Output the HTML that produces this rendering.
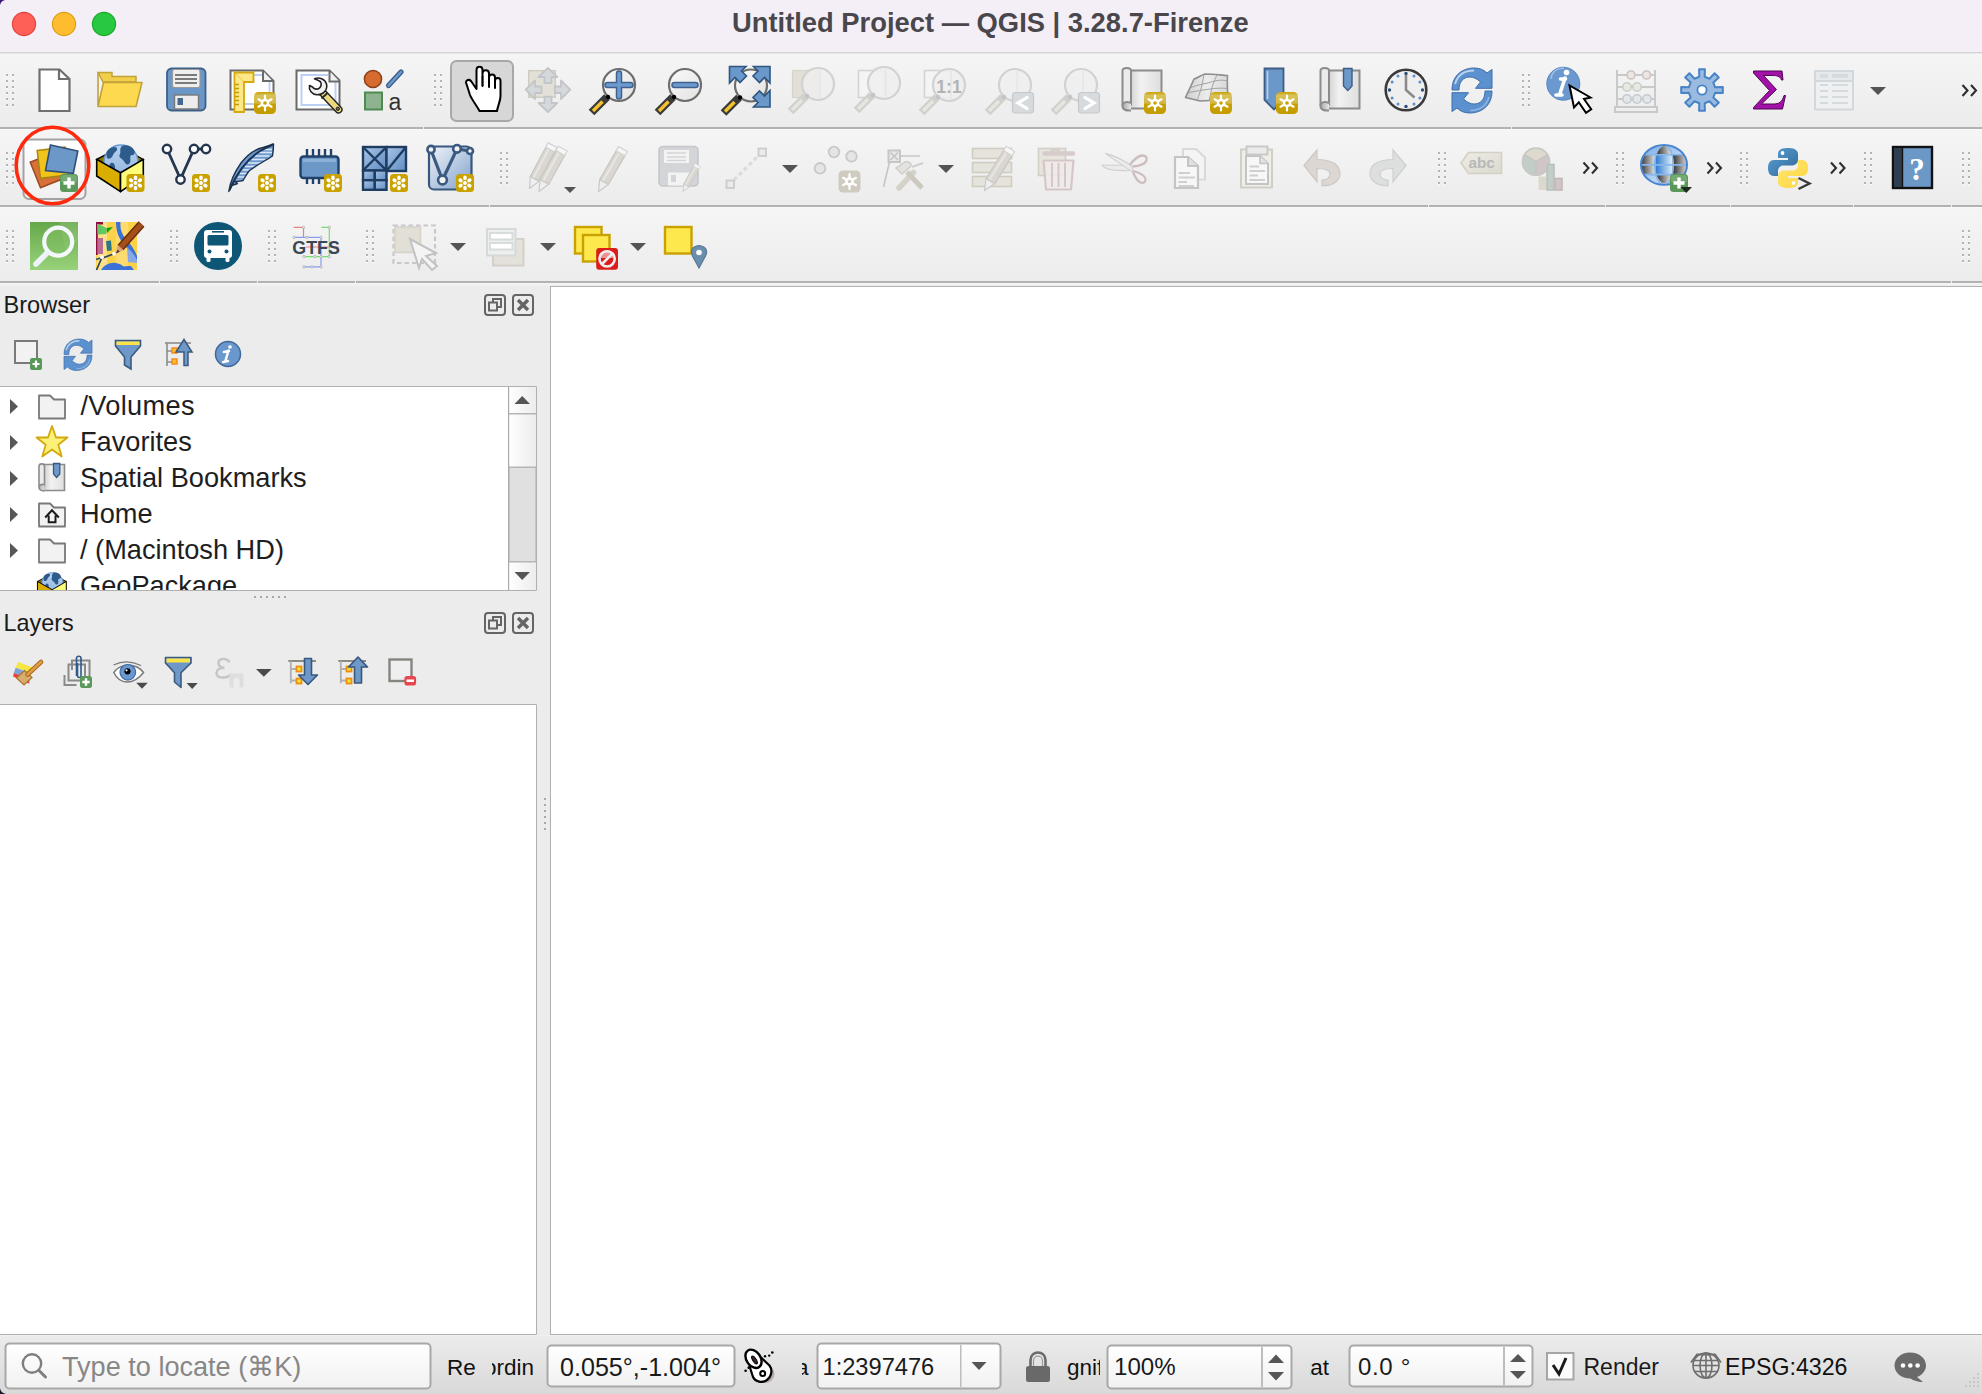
<!DOCTYPE html>
<html><head><meta charset="utf-8">
<style>
html,body{margin:0;padding:0;width:1982px;height:1394px;overflow:hidden;background:#ececec;}
svg{position:absolute;left:0;top:0;display:block}
text{font-family:"Liberation Sans",sans-serif}
text.serif{font-family:"Liberation Serif",serif}
</style></head>
<body>
<svg width="1982" height="1394" viewBox="0 0 1982 1394">
<defs>
 <linearGradient id="tbg" x1="0" y1="0" x2="0" y2="1"><stop offset="0" stop-color="#f5f5f5"/><stop offset="1" stop-color="#ececec"/></linearGradient>
 <linearGradient id="sbg" x1="0" y1="0" x2="0" y2="1"><stop offset="0" stop-color="#ececec"/><stop offset="1" stop-color="#d9d9d9"/></linearGradient>
 <linearGradient id="fld" x1="0" y1="0" x2="0" y2="1"><stop offset="0" stop-color="#ffffff"/><stop offset="1" stop-color="#f1f1f1"/></linearGradient>
 <linearGradient id="sbtn" x1="0" y1="0" x2="1" y2="0"><stop offset="0" stop-color="#ffffff"/><stop offset="1" stop-color="#ececec"/></linearGradient>
 <g id="dots"><rect x="0" y="2" width="2" height="1" fill="#fafafa"/><rect x="6" y="2" width="2" height="1" fill="#fafafa"/><rect x="0" y="8" width="2" height="1" fill="#fafafa"/><rect x="6" y="8" width="2" height="1" fill="#fafafa"/><rect x="0" y="14" width="2" height="1" fill="#fafafa"/><rect x="6" y="14" width="2" height="1" fill="#fafafa"/><rect x="0" y="20" width="2" height="1" fill="#fafafa"/><rect x="6" y="20" width="2" height="1" fill="#fafafa"/><rect x="0" y="26" width="2" height="1" fill="#fafafa"/><rect x="6" y="26" width="2" height="1" fill="#fafafa"/><rect x="0" y="32" width="2" height="1" fill="#fafafa"/><rect x="6" y="32" width="2" height="1" fill="#fafafa"/><rect x="0" y="0" width="2" height="2"/><rect x="6" y="0" width="2" height="2"/><rect x="0" y="6" width="2" height="2"/><rect x="6" y="6" width="2" height="2"/><rect x="0" y="12" width="2" height="2"/><rect x="6" y="12" width="2" height="2"/><rect x="0" y="18" width="2" height="2"/><rect x="6" y="18" width="2" height="2"/><rect x="0" y="24" width="2" height="2"/><rect x="6" y="24" width="2" height="2"/><rect x="0" y="30" width="2" height="2"/><rect x="6" y="30" width="2" height="2"/></g>
 <path id="dd" d="M0,0H16L8,8Z" fill="#545454"/>
 <path id="chev" d="M0.5,0.5L5.5,6L0.5,11.5M9,0.5L14,6L9,11.5" fill="none" stroke="#2e2e2e" stroke-width="2.1"/>
</defs>

<!-- title bar -->
<rect x="0" y="0" width="1982" height="52" fill="#f4eff6"/>
<rect x="0" y="52" width="1982" height="1" fill="#d3d3d3"/>
<rect x="0" y="53" width="1982" height="1" fill="#e7e7e7"/>
<circle cx="24" cy="24" r="11.6" fill="#fe5f57" stroke="#df4039" stroke-width="1.1"/>
<circle cx="64" cy="24" r="11.6" fill="#febc2e" stroke="#dd9d12" stroke-width="1.1"/>
<circle cx="104" cy="24" r="11.6" fill="#28c840" stroke="#18a826" stroke-width="1.1"/>
<text x="732" y="32" font-size="27.35" font-weight="bold" fill="#4a474c">Untitled Project — QGIS | 3.28.7-Firenze</text>

<!-- toolbars -->
<rect x="0" y="54" width="1982" height="73" fill="url(#tbg)"/>
<rect x="0" y="127" width="1982" height="2" fill="#b2b2b2"/>
<rect x="0" y="129" width="1982" height="1" fill="#f8f8f8"/>
<rect x="0" y="130" width="1982" height="75" fill="url(#tbg)"/>
<rect x="0" y="205" width="1982" height="2" fill="#b2b2b2"/>
<rect x="0" y="207" width="1982" height="1" fill="#f8f8f8"/>
<rect x="0" y="208" width="1982" height="73" fill="url(#tbg)"/>
<rect x="0" y="281" width="1982" height="2" fill="#b2b2b2"/>
<rect x="0" y="283" width="1982" height="1" fill="#f6f6f6"/><rect x="0" y="284" width="1982" height="2" fill="#f0f0f0"/>

<g fill="#f0f0f0">
<rect x="423" y="127" width="1" height="2"/><rect x="1511" y="127" width="1" height="2"/>
<rect x="489" y="205" width="1" height="2"/><rect x="1428" y="205" width="1" height="2"/><rect x="1605" y="205" width="1" height="2"/><rect x="1730" y="205" width="1" height="2"/><rect x="1853" y="205" width="1" height="2"/><rect x="1951" y="205" width="1" height="2"/>
<rect x="159" y="281" width="1" height="2"/><rect x="257" y="281" width="1" height="2"/><rect x="355" y="281" width="1" height="2"/><rect x="1951" y="281" width="1" height="2"/>
</g>
<!-- panels -->
<text x="3.5" y="313" font-size="23.6" fill="#1a1a1a">Browser</text>
<rect x="0" y="386" width="537" height="205" fill="#ffffff"/><path d="M-1,386.5H536.5V590.5H-1" fill="none" stroke="#b0b0b0" stroke-width="1"/>
<text x="3.5" y="631" font-size="23.4" fill="#1a1a1a">Layers</text>
<rect x="0" y="704" width="537" height="631" fill="#ffffff"/><path d="M-1,704.5H536.5V1334.5H-1" fill="none" stroke="#b0b0b0" stroke-width="1"/>

<!-- map canvas -->
<rect x="550.5" y="286.5" width="1440" height="1048" fill="#ffffff" stroke="#b0b0b0" stroke-width="1"/>

<!-- status bar -->
<rect x="0" y="1335" width="1982" height="59" fill="url(#sbg)"/><rect x="0" y="1335" width="1982" height="1" fill="#f0f0f0"/>

<!-- ===== status bar ===== -->
<rect x="5.5" y="1343.5" width="425" height="45" rx="4" fill="url(#fld)" stroke="#a8a8a8" stroke-width="2"/>
<circle cx="32" cy="1363.5" r="9.2" fill="none" stroke="#7e7e7e" stroke-width="2.4"/>
<path d="M39,1370.5L45.5,1377" stroke="#7e7e7e" stroke-width="3" stroke-linecap="round"/>
<text x="62" y="1376" font-size="27.1" fill="#878787">Type to locate (⌘K)</text>
<text x="447" y="1375" font-size="22.5" fill="#111">Re</text>
<clipPath id="cpOrd"><rect x="492" y="1340" width="60" height="50"/></clipPath>
<text x="484" y="1375" font-size="22.5" fill="#111" clip-path="url(#cpOrd)">ordin</text>
<rect x="547.5" y="1345.5" width="187" height="41" rx="4" fill="url(#fld)" stroke="#a8a8a8" stroke-width="2"/>
<text x="560" y="1375.5" font-size="25.1" fill="#1a1a1a">0.055°,-1.004°</text>
<!-- mouse icon -->
<g>
 <circle cx="765.5" cy="1374" r="9" fill="#b9abab"/>
 <path d="M749.5,1366L761,1357.5L769.5,1365.5C772.5,1369.5 772,1376.5 767,1380C762,1383.5 755.5,1382 753,1377Z" fill="#fff" stroke="#000" stroke-width="2.2" stroke-linejoin="round"/>
 <ellipse cx="753.5" cy="1358.8" rx="10" ry="7" transform="rotate(55 753.5 1358.8)" fill="#fff" stroke="#000" stroke-width="2.4"/>
 <ellipse cx="754.5" cy="1360" rx="4.6" ry="1.7" transform="rotate(58 754.5 1360)" fill="#3a2828" stroke="#000" stroke-width="1"/>
 <circle cx="762.7" cy="1373.4" r="2.5" fill="#fff" stroke="#000" stroke-width="2"/>
 <g fill="#000"><circle cx="745.6" cy="1370.7" r="1.3"/><circle cx="748.6" cy="1367.8" r="1.2"/><circle cx="765" cy="1356.2" r="1.2"/><circle cx="769.2" cy="1355.6" r="1.2"/><circle cx="772.3" cy="1352.5" r="1.3"/></g>
</g>
<clipPath id="cpA"><rect x="802" y="1340" width="9" height="50"/></clipPath>
<text x="796" y="1375" font-size="22.5" fill="#111" clip-path="url(#cpA)">a</text>
<rect x="817.5" y="1343.5" width="183" height="45" rx="4" fill="url(#fld)" stroke="#a8a8a8" stroke-width="2"/>
<rect x="960" y="1345" width="1.5" height="42" fill="#bdbdbd"/>
<path d="M971.5,1362H986.5L979,1370Z" fill="#555"/>
<text x="822.5" y="1375" font-size="23.65" fill="#1a1a1a">1:2397476</text>
<!-- lock -->
<path d="M1030.5,1367V1360C1030.5,1350 1045.5,1350 1045.5,1360V1367" fill="none" stroke="#6b6b6b" stroke-width="2.6"/>
<path d="M1033.5,1367V1361C1033.5,1354.5 1042.5,1354.5 1042.5,1361V1367" fill="none" stroke="#9a9a9a" stroke-width="1.2"/>
<rect x="1026" y="1366" width="24" height="16" rx="2.5" fill="#696969"/>
<clipPath id="cpG"><rect x="1060" y="1340" width="40" height="50"/></clipPath>
<text x="1067" y="1375" font-size="22.5" fill="#111" clip-path="url(#cpG)">gnif</text>
<rect x="1107.5" y="1345.5" width="184" height="43" rx="4" fill="url(#fld)" stroke="#a8a8a8" stroke-width="2"/>
<rect x="1261" y="1347" width="2" height="40" fill="#bdbdbd"/>
<path d="M1268,1363H1284L1276,1354.5Z" fill="#555"/>
<path d="M1268,1372H1284L1276,1380.5Z" fill="#555"/>
<text x="1114" y="1375" font-size="24.1" fill="#1a1a1a">100%</text>
<clipPath id="cpR"><rect x="1310" y="1340" width="30" height="50"/></clipPath>
<text x="1304" y="1375" font-size="22.5" fill="#111" clip-path="url(#cpR)">tat</text>
<rect x="1349.5" y="1345.5" width="183" height="41" rx="4" fill="url(#fld)" stroke="#a8a8a8" stroke-width="2"/>
<rect x="1503" y="1347" width="2" height="38" fill="#bdbdbd"/>
<path d="M1510,1362H1526L1518,1354Z" fill="#555"/>
<path d="M1510,1371H1526L1518,1379Z" fill="#555"/>
<text x="1358" y="1375" font-size="24" fill="#1a1a1a" textLength="52.3" lengthAdjust="spacing">0.0 °</text>
<rect x="1547" y="1353" width="26.5" height="26.5" fill="#fbfbfb" stroke="#a5a5a5" stroke-width="2"/>
<path d="M1553,1365 L1559,1374 L1566,1358" fill="none" stroke="#1a1a1a" stroke-width="3"/>
<text x="1583.5" y="1374.6" font-size="23" fill="#1a1a1a">Render</text>
<!-- crs globe -->
<g transform="translate(1706,1365.5)" fill="none" stroke="#6e6e6e" stroke-width="1.6">
 <ellipse cx="0" cy="0" rx="13" ry="12.5"/>
 <ellipse cx="0" cy="0" rx="6" ry="12.5"/>
 <path d="M0,-12.5V12.5M-13,0H13M-12,-5H12M-12,6H12"/>
 <path d="M-15,-3 L-9,-11 H9 L15,-3" stroke-width="1.8"/>
</g>
<text x="1725" y="1375" font-size="23.2" fill="#111">EPSG:4326</text>
<!-- chat bubble -->
<path d="M1910,1352.5 C1919.5,1352.5 1926,1358.5 1926,1365.5 C1926,1371 1922,1375 1917,1377 L1923,1382 C1917,1382 1912.5,1380 1910.5,1378.5 C1901,1378.5 1894.5,1372.5 1894.5,1365.5 C1894.5,1358.5 1901,1352.5 1910,1352.5Z" fill="#6a6a6a"/>
<circle cx="1903" cy="1365.5" r="2.3" fill="#fff"/><circle cx="1910.3" cy="1365.5" r="2.3" fill="#fff"/><circle cx="1917.6" cy="1365.5" r="2.3" fill="#fff"/>
<g fill="#c8c8c8"><rect x="1977" y="1373" width="2" height="2"/><rect x="1973" y="1377" width="2" height="2"/><rect x="1977" y="1377" width="2" height="2"/><rect x="1969" y="1381" width="2" height="2"/><rect x="1973" y="1381" width="2" height="2"/><rect x="1977" y="1381" width="2" height="2"/><rect x="1965" y="1385" width="2" height="2"/><rect x="1969" y="1385" width="2" height="2"/><rect x="1973" y="1385" width="2" height="2"/><rect x="1977" y="1385" width="2" height="2"/></g>

<!-- ===== dock panels ===== -->
<g id="dockbtns">
 <g transform="translate(484,294)">
  <rect x="1" y="1" width="20" height="20" rx="3" fill="none" stroke="#656565" stroke-width="2"/>
  <rect x="5" y="8.5" width="8" height="8" fill="none" stroke="#656565" stroke-width="2"/>
  <path d="M9,8.5V5H17V13H13" fill="none" stroke="#656565" stroke-width="2"/>
 </g>
 <g transform="translate(512,294)">
  <rect x="1" y="1" width="20" height="20" rx="3" fill="none" stroke="#656565" stroke-width="2"/>
  <path d="M6,6L16,16M16,6L6,16" stroke="#656565" stroke-width="3.4"/>
 </g>
</g>
<use href="#dockbtns" transform="translate(0,318)"/>

<!-- browser toolbar -->
<g transform="translate(0,0)">
 <rect x="15" y="341" width="22" height="22" fill="#f2f2f2" stroke="#7a7a7a" stroke-width="2"/>
 <rect x="30" y="358" width="12" height="12" rx="2" fill="#5a985a"/>
 <path d="M36,360.5V367.5M32.5,364H39.5" stroke="#fff" stroke-width="2.2"/>
</g>
<use href="#refresh0" transform="translate(64,339) scale(0.7) translate(-1452,-68)"/>
<g>
 <path d="M115.5,340.5H140.5V346L131,357V369L124.5,365V357L115.5,346Z" fill="#6d98c8" stroke="#3a5a80" stroke-width="1.6"/>
 <rect x="116.5" y="341.5" width="23" height="3.5" fill="#fbe44a"/>
</g>
<g>
 <path d="M165,343H191" stroke="#8c8c8c" stroke-width="1.6"/>
 <path d="M167,343V366M167,351H172M167,362H172" stroke="#8c8c8c" stroke-width="1.6"/>
 <rect x="172" y="348" width="5" height="5" fill="#fbbd2c" stroke="#f08a12" stroke-width="1.4"/>
 <rect x="172" y="359" width="5" height="5" fill="#fbbd2c" stroke="#f08a12" stroke-width="1.4"/>
 <path d="M184,365.5V352H176L184,339.5L192,352H188V365.5Z" fill="#6d98c8" stroke="#3a5a80" stroke-width="1.5"/>
</g>
<g>
 <circle cx="228" cy="354" r="12.5" fill="#6b98cc" stroke="#41679a" stroke-width="1.5"/>
 <circle cx="230" cy="347" r="1.8" fill="#fff"/>
 <path d="M228.5,350.5 L225.2,361.5 M223.8,352 L229,351 M223,362 L228,361" stroke="#fff" stroke-width="2.4" stroke-linecap="round"/>
</g>

<!-- browser tree -->
<g fill="#575757">
 <path d="M10,399L18,406.5L10,414Z"/>
 <path d="M10,435L18,442.5L10,450Z"/>
 <path d="M10,471L18,478.5L10,486Z"/>
 <path d="M10,507L18,514.5L10,522Z"/>
 <path d="M10,543L18,550.5L10,558Z"/>
</g>
<g id="folderIco">
 <path d="M39,395.5H50L54,399.5H65V418.5H39Z" fill="#f2f2f2" stroke="#787878" stroke-width="1.8" stroke-linejoin="round"/>
 <path d="M39,400H65" stroke="#787878" stroke-width="0" />
</g>
<use href="#folderIco" transform="translate(0,144)"/>
<g>
 <path d="M39,503.5H50L54,507.5H65V526.5H39Z" fill="#f2f2f2" stroke="#787878" stroke-width="1.8" stroke-linejoin="round"/>
 <path d="M45.2,517.5L52,510.2L58.8,517.5M48.7,515.5V522.2H55.5V515.5" fill="none" stroke="#1a1a1a" stroke-width="2"/>
</g>
<path d="M52,426L56,437.5H67.5L58.3,444.7L61.7,456.5L52,449.5L42.3,456.5L45.7,444.7L36.5,437.5H48Z" fill="#fbf07a" stroke="#d4a90c" stroke-width="1.8" stroke-linejoin="round"/>
<g>
 <path d="M44,464.5H64.5V490.5H44Z" fill="url(#pageG)" stroke="#8c8c8c" stroke-width="1.6"/>
 <path d="M39,466.5C39,463 44.5,463 44.5,466.5V486H39Z" fill="#ebebeb" stroke="#8c8c8c" stroke-width="1.6"/>
 <path d="M44.5,485C41.5,483.5 39,485 39,487.5C39,490 41.5,491 44.5,490.8" fill="url(#curlG)" stroke="#8c8c8c" stroke-width="1.6"/>
 <path d="M53.5,463.5H59.8V474L56.6,477.5L53.5,474Z" fill="#6d98c8" stroke="#3a5a80" stroke-width="1.3"/>
</g>
<clipPath id="cpTree"><rect x="0" y="387" width="508" height="203"/></clipPath>
<g clip-path="url(#cpTree)">
 <use href="#gpkgIco" transform="translate(37,570) scale(0.62)"/>
 <g font-size="27.2" fill="#1e1e1e">
  <text x="80.5" y="414.8" textLength="114" lengthAdjust="spacing">/Volumes</text>
  <text x="80" y="450.7">Favorites</text>
  <text x="80" y="486.5">Spatial Bookmarks</text>
  <text x="80" y="522.5">Home</text>
  <text x="80" y="558.5">/ (Macintosh HD)</text>
  <text x="80" y="594.5">GeoPackage</text>
 </g>
</g>
<!-- scrollbar -->
<rect x="508.5" y="387" width="27.5" height="203" fill="url(#sbtn)"/>
<rect x="508" y="387" width="1.2" height="203" fill="#a9a9a9"/>
<rect x="509" y="413" width="27" height="1.5" fill="#b5b5b5"/>
<rect x="509.5" y="467.5" width="26" height="94" fill="#e0e0e0" stroke="#c4c4c4" stroke-width="1"/>
<rect x="509" y="466.5" width="27" height="1.5" fill="#b5b5b5"/>
<rect x="509" y="561" width="27" height="1.5" fill="#b5b5b5"/>
<path d="M514.5,404H530L522.2,396Z" fill="#555"/>
<path d="M514.5,572H530L522.2,580Z" fill="#555"/>
<g fill="#a8a8a8"><rect x="254" y="596" width="2" height="2"/><rect x="260" y="596" width="2" height="2"/><rect x="266" y="596" width="2" height="2"/><rect x="272" y="596" width="2" height="2"/><rect x="278" y="596" width="2" height="2"/><rect x="284" y="596" width="2" height="2"/></g>
<g fill="#a8a8a8"><rect x="544" y="798" width="2" height="2"/><rect x="544" y="804" width="2" height="2"/><rect x="544" y="810" width="2" height="2"/><rect x="544" y="816" width="2" height="2"/><rect x="544" y="822" width="2" height="2"/><rect x="544" y="828" width="2" height="2"/></g>

<!-- ===== toolbar 1 ===== -->
<defs>
 <linearGradient id="lens" x1="0" y1="0" x2="1" y2="1"><stop offset="0" stop-color="#fafafa"/><stop offset="1" stop-color="#e2e2e2"/></linearGradient>
 <linearGradient id="badgeG" x1="0" y1="0" x2="0" y2="1"><stop offset="0" stop-color="#c9a200"/><stop offset="0.16" stop-color="#d8c158"/><stop offset="0.5" stop-color="#d3b848"/><stop offset="0.56" stop-color="#c8a100"/><stop offset="1" stop-color="#c49c00"/></linearGradient>
 <linearGradient id="pageG" x1="0" y1="0" x2="1" y2="0"><stop offset="0" stop-color="#d2d2d2"/><stop offset="0.35" stop-color="#f2f2f2"/><stop offset="1" stop-color="#dedede"/></linearGradient>
 <g id="mag">
  <path d="M-12,12L-27.5,27.5" stroke="#3a3a3a" stroke-width="8" stroke-linecap="butt"/>
  <path d="M-16.5,16.5L-26,26" stroke="#f3c22c" stroke-width="3.4"/>
  <circle cx="0" cy="0" r="16" fill="url(#lens)" stroke="#6d6d6d" stroke-width="2.2"/>
  <circle cx="-11" cy="12" r="2.2" fill="#000"/>
 </g>
 <g id="magD">
  <path d="M-12,12L-27.5,27.5" stroke="#d0d0d0" stroke-width="8"/>
  <path d="M-16,16L-26,26" stroke="#e8e5dd" stroke-width="3.4"/>
  <circle cx="0" cy="0" r="16" fill="#efefef" fill-opacity="0.85" stroke="#d2d2d2" stroke-width="2.2"/>
  <path d="M2,-14V14" stroke="#e2e2e2" stroke-width="1"/>
  <circle cx="-11" cy="12" r="2.2" fill="#c4c4c4"/>
 </g>
 <g id="gearBadge">
  <rect x="0" y="0" width="22" height="22" rx="4.5" fill="url(#badgeG)"/>
  <g stroke="#fff" stroke-width="2.2" stroke-linecap="round">
   <path d="M11,3.5V18.5M4.5,7.3L17.5,14.7M4.5,14.7L17.5,7.3"/>
  </g>
  <circle cx="11" cy="11" r="4.3" fill="#fff"/>
  <circle cx="11" cy="11" r="1.8" fill="#c9a200"/>
 </g>
 <g id="gearBadgeD">
  <rect x="0" y="0" width="22" height="22" rx="4.5" fill="#cfcbc0"/>
  <g stroke="#fff" stroke-width="2.2" stroke-linecap="round">
   <path d="M11,3.5V18.5M4.5,7.3L17.5,14.7M4.5,14.7L17.5,7.3"/>
  </g>
  <circle cx="11" cy="11" r="4.3" fill="#fff"/>
  <circle cx="11" cy="11" r="1.8" fill="#cfcbc0"/>
 </g>
 <g id="roll">
  <path d="M8,3H39.5V41H8Z" fill="url(#pageG)" stroke="#8c8c8c" stroke-width="2"/>
  <path d="M0.5,3C0.5,-0.5 9,-0.5 9,3V37H0.5Z" fill="#ebebeb" stroke="#8c8c8c" stroke-width="2"/>
  <path d="M9,35.5C4,33.5 0.5,35 0.5,38.5C0.5,42 4,43.5 9,43" fill="url(#curlG)" stroke="#8c8c8c" stroke-width="2"/>
 </g>
 <linearGradient id="curlG" x1="0" y1="0" x2="1" y2="0"><stop offset="0" stop-color="#a8a8a8"/><stop offset="1" stop-color="#e6e6e6"/></linearGradient>
</defs>
<g fill="#b3b3b3">
 <use href="#dots" x="6" y="74"/><use href="#dots" x="434" y="74"/><use href="#dots" x="1522" y="74"/>
</g>
<!-- new project -->
<path d="M39.5,69.5H59.5L69.5,79V111H39.5Z" fill="#fff" stroke="#6f6f6f" stroke-width="2.2" stroke-linejoin="miter"/>
<path d="M59,69.5V79H69.5" fill="none" stroke="#6f6f6f" stroke-width="2.2"/>
<!-- open -->
<path d="M98,72.5H112V76.5H136V82H103Z" fill="#f1cf4a" stroke="#c2a23a" stroke-width="1.5"/>
<path d="M98,72.5V106.5H136L142,82.5H103.5L98,106.5" fill="#fdd94f" stroke="#c2a23a" stroke-width="1.6" stroke-linejoin="round"/>
<!-- save -->
<rect x="167" y="68.5" width="38.5" height="42" rx="4.5" fill="#6b97c8" stroke="#3d6089" stroke-width="1.8"/>
<rect x="172.5" y="69.5" width="27.5" height="18" rx="2" fill="#efefef" stroke="#9a9a9a" stroke-width="1.2"/>
<path d="M175,75H197M175,79H197M175,83H197" stroke="#555" stroke-width="1.6"/>
<rect x="174.5" y="95" width="24" height="14" fill="#ededed" stroke="#777" stroke-width="1.4"/>
<rect x="177.5" y="98" width="5.5" height="7" fill="#46688f"/>
<!-- layout manager -->
<path d="M230.5,70.5H263L273.5,81V109.5H230.5Z" fill="#fff" stroke="#6a6a6a" stroke-width="2"/>
<path d="M262,75H240V104H269.5V82" fill="none" stroke="#bcd0f4" stroke-width="1.8"/>
<path d="M264,72V81H272.5Z" fill="#f0f0f0"/>
<path d="M263,70.5V81H273.5" fill="none" stroke="#6a6a6a" stroke-width="2"/>
<path d="M234.5,72.5H253.5V82H244V112H234.5Z" fill="#fde787" stroke="#d4aa0e" stroke-width="1.8"/>
<path d="M235,73L243,81" stroke="#e7c445" stroke-width="1"/>
<path d="M235,84.5H239M235,88.5H239M235,92.5H239M235,96.5H239M235,100.5H239M235,104.5H239" stroke="#c49a00" stroke-width="1.4"/>
<use href="#gearBadge" x="254" y="92"/>
<!-- style manager -->
<path d="M296.5,70.5H329.5L339.5,80.5V109.5H296.5Z" fill="#fff" stroke="#6a6a6a" stroke-width="2"/>
<path d="M328,75H301.5V105H335.5V82" fill="none" stroke="#bcd0f4" stroke-width="2"/>
<path d="M329.5,71.5L338.5,80.5Z" fill="none"/><path d="M330.5,72V80.5H338.5Z" fill="#f0f0f0"/><path d="M329.5,70.5V81.5H339.5" fill="none" stroke="#6a6a6a" stroke-width="2"/>
<path d="M321.5,91.5L338.5,109.5" stroke="#222" stroke-width="8.2" stroke-linecap="round"/>
<path d="M321.5,91.5L338.5,109.5" stroke="#ead97f" stroke-width="5.4" stroke-linecap="round"/>
<path d="M321.5,98.5L327.5,93" stroke="#2a2a2a" stroke-width="1.8"/>
<circle cx="337.8" cy="108.8" r="1.7" fill="#666" stroke="#222" stroke-width="1"/>
<path d="M314.5,78.8C319,77 325,78.5 326.5,84C328,90 323,95 317,94.8C312,94.5 308.5,90 309.5,85.5L312.5,87C314,89.5 318,90 320,87.5C322,85 321.5,81.5 318.5,80.5Z" fill="#f1f2f0" stroke="#222" stroke-width="1.6" stroke-linejoin="round"/>
<!-- symbology -->
<circle cx="373" cy="79" r="8.6" fill="#d66c30" stroke="#8c3f18" stroke-width="1.5"/>
<path d="M388.5,85.5L401,72" stroke="#3d618c" stroke-width="5.2" stroke-linecap="round"/>
<path d="M388.5,85.5L401,72" stroke="#6c9bd0" stroke-width="2.4" stroke-linecap="round"/>
<rect x="365" y="92.5" width="17" height="17" fill="#8db38f" stroke="#4f8a52" stroke-width="2"/>
<text x="388.5" y="109.5" font-size="23" fill="#333">a</text>
<!-- pan (checked) -->
<rect x="451" y="61" width="62" height="60" rx="5.5" fill="#d7d7d7" stroke="#a8a8a8" stroke-width="2"/>
<g stroke="#000" stroke-width="2" fill="#fff" stroke-linejoin="round">
 <path d="M466.5,84C464.5,81 468.5,78.5 471,81L476.5,89V70C476.5,65.5 482.5,65.5 482.5,70V86V73.5C482.5,69 489,69 489,73.5V87V77.5C489,73.5 495,73.5 495,77.5V88V81C495,77 500.5,77 500.5,81V96C500.5,101 498,105 497,111H479.5C477,106 472,100 470,95Z"/>
</g>
<path d="M482.5,86V76M489,87V79M495,88V83" stroke="#000" stroke-width="1.6"/>
<!-- pan to selection (disabled) -->
<rect x="528.7" y="70.7" width="26.5" height="26.5" fill="#e3e0d8" stroke="#cfccc2" stroke-width="1.5"/>
<g fill="#d6d9dc" stroke="#c3c5c8" stroke-width="1.8" stroke-linejoin="round">
 <path d="M547.9,67.8L557.3,77H551.5V83H544.5V77H538.5Z"/>
 <path d="M547.9,112L557.3,103H551.5V96.7H544.5V103H538.5Z"/>
 <path d="M525.7,89.7L535,80.5V86.5H541.5V93H535V99Z"/>
 <path d="M570.3,89.7L561,80.5V86.5H554.8V93H561V99Z"/>
</g>
<!-- zoom in -->
<use href="#mag" x="619" y="85"/>
<path d="M619,73.5V96.5M607.5,85H630.5" stroke="#3e6190" stroke-width="6.5" stroke-linecap="round"/>
<path d="M619,73.5V96.5M607.5,85H630.5" stroke="#6c9acd" stroke-width="3.6" stroke-linecap="round"/>
<!-- zoom out -->
<use href="#mag" x="685" y="85"/>
<path d="M674.5,85H695.5" stroke="#3e6190" stroke-width="6.5" stroke-linecap="round"/>
<path d="M674.5,85H695.5" stroke="#6c9acd" stroke-width="3.6" stroke-linecap="round"/>
<!-- zoom full -->
<use href="#mag" x="751" y="85.5"/>
<g fill="#6a98cb" stroke="#2f5580" stroke-width="1.6" stroke-linejoin="miter">
 <path d="M729.5,66.5H746L741.5,71L746.5,76L740,82.5L735,77.5L729.5,83Z"/>
 <path d="M770,66.5H753.5L758,71L753,76L759.5,82.5L764.5,77.5L770,83Z"/>
 <path d="M770,107H753.5L758,102.5L753,97.5L759.5,91L764.5,96L770,90.5Z"/>
</g>
<!-- zoom to selection (disabled) -->
<rect x="792.5" y="70.5" width="26" height="27" fill="#e2dfd6" stroke="#d6d3ca" stroke-width="1.2"/>
<use href="#magD" x="818" y="84"/>
<!-- zoom to layer (disabled) -->
<rect x="858.5" y="70.5" width="26" height="27" fill="#f4f4f4" stroke="#d4d4d4" stroke-width="1.6"/>
<use href="#magD" x="884" y="83"/>
<!-- zoom native (disabled) -->
<rect x="924.5" y="70.5" width="26" height="27" fill="#f4f4f4" stroke="#d4d4d4" stroke-width="1.6"/>
<use href="#magD" x="949" y="85"/>
<text x="949" y="92.5" font-size="17.5" font-weight="bold" fill="#b3b3b3" text-anchor="middle">1:1</text>
<!-- zoom last / next (disabled) -->
<use href="#magD" x="1015" y="85"/>
<rect x="1012.5" y="92.5" width="21" height="20.5" rx="3" fill="#d8dbde" stroke="#c6c9cc" stroke-width="1.2"/>
<path d="M1027,97.5L1018,103L1027,108.5" fill="none" stroke="#fff" stroke-width="3.2" stroke-linecap="round"/>
<use href="#magD" x="1081" y="85"/>
<rect x="1078.5" y="92.5" width="21" height="20.5" rx="3" fill="#d8dbde" stroke="#c6c9cc" stroke-width="1.2"/>
<path d="M1085,97.5L1094,103L1085,108.5" fill="none" stroke="#fff" stroke-width="3.2" stroke-linecap="round"/>
<!-- new map view -->
<use href="#roll" x="1122" y="67.5"/>
<use href="#gearBadge" x="1144" y="92"/>
<!-- new 3d map view -->
<linearGradient id="m3G" x1="0" y1="0" x2="1" y2="0"><stop offset="0" stop-color="#cfcfcf"/><stop offset="0.5" stop-color="#ececec"/><stop offset="1" stop-color="#d8d8d8"/></linearGradient>
<path d="M1185.5,97.5C1188,92 1191,86 1194,79C1198,78 1201,75 1205,74C1213,74 1220,75 1227.5,75.5C1227,84 1227.5,92 1228,100.5C1218,99 1209,101 1201,101C1196,100 1190,98.5 1185.5,97.5Z" fill="url(#m3G)" stroke="#8e8e8e" stroke-width="1.6" stroke-linejoin="round"/>
<path d="M1191,87.5C1197,85 1203,84 1208,83C1214,81 1220,79 1227.5,81M1189,92.5C1196,91 1203,90 1210,89C1216,88 1222,88 1227.5,88.5M1204,74.5C1203,80 1202,86 1200,92C1199,95 1198,98 1197,100M1217,75C1214,81 1212,86 1211,92C1210,95 1210,98 1209,101" fill="none" stroke="#9c9c9c" stroke-width="0.9"/>
<use href="#gearBadge" x="1210" y="92"/>
<!-- new bookmark -->
<path d="M1264.5,68.5H1283.5V100L1274,109.5L1264.5,100Z" fill="#6c98c9" stroke="#3c5d86" stroke-width="1.8"/>
<path d="M1267.5,71V99" stroke="#b9d2ee" stroke-width="1.6"/>
<use href="#gearBadge" x="1276" y="92"/>
<!-- show bookmarks -->
<use href="#roll" x="1320" y="67.5"/>
<path d="M1343.5,68.5H1352V86L1347.8,90.5L1343.5,86Z" fill="#6c98c9" stroke="#3c5d86" stroke-width="1.4"/>
<!-- temporal clock -->
<circle cx="1406" cy="90" r="20.3" fill="#efefef" stroke="#3a3a3a" stroke-width="2.6"/>
<g fill="#5b8fd0">
 <circle cx="1414" cy="76.1" r="1.5"/><circle cx="1419.9" cy="82" r="1.5"/><circle cx="1419.9" cy="98" r="1.5"/><circle cx="1414" cy="103.9" r="1.5"/><circle cx="1398" cy="103.9" r="1.5"/><circle cx="1392.1" cy="98" r="1.5"/><circle cx="1392.1" cy="82" r="1.5"/><circle cx="1398" cy="76.1" r="1.5"/>
</g>
<g fill="#2b4f7a"><circle cx="1406" cy="73.5" r="1.7"/><circle cx="1422.5" cy="90" r="1.7"/><circle cx="1406" cy="106.5" r="1.7"/><circle cx="1389.5" cy="90" r="1.7"/></g>
<path d="M1406,75V90L1414.5,97.5" fill="none" stroke="#8a8a8a" stroke-width="2.6"/>
<!-- refresh -->
<g id="refresh0">
<path d="M1452,90C1452,74 1464,68 1474,68C1480,68 1484,70 1487,73L1492,69.4V88.3H1475.5L1480.5,82C1477,78.5 1473,77 1470,77C1463,77 1459,82 1459,90Z" fill="#5b91cf" stroke="#3f6fab" stroke-width="1"/>
<path d="M1492,91C1492,107 1480,113 1470,113C1464,113 1460,111 1457,108L1452,111.6V92.7H1468.5L1463.5,99C1467,102.5 1471,104 1474,104C1481,104 1485,99 1485,91Z" fill="#5b91cf" stroke="#3f6fab" stroke-width="1"/>
<path d="M1455,84C1458,74 1466,70.5 1474,70.5" fill="none" stroke="#b9d2ee" stroke-width="2"/>
<path d="M1489,97C1486,107 1478,110.5 1470,110.5" fill="none" stroke="#8fb3df" stroke-width="1.6"/>
</g>
<!-- identify -->
<circle cx="1563.3" cy="83.7" r="16.5" fill="#6b99cf" stroke="#5786bf" stroke-width="1"/>
<path d="M1551,79C1552,71 1558,68 1564,68" fill="none" stroke="#9dbde3" stroke-width="1.6"/>
<circle cx="1566.5" cy="72.5" r="2.8" fill="#fff"/>
<path d="M1565,78L1559.5,95M1560.5,79H1565.5M1556,95H1562" stroke="#fff" stroke-width="3.6" stroke-linecap="round"/>
<path d="M1569.5,85.5L1574,107.5L1578.8,102.3L1586,112.8L1591.2,109.2L1584,99L1590.5,97.5Z" fill="#fff" stroke="#000" stroke-width="2" stroke-linejoin="miter"/>
<!-- measure abacus (disabled) -->
<g fill="none" stroke="#c9c9c9" stroke-width="2">
 <path d="M1617,70V107M1655,70V107"/>
 <rect x="1615" y="107" width="42" height="5"/>
 <path d="M1617,75H1655M1617,87H1655M1617,99H1655"/>
</g>
<g stroke-width="1.6">
 <circle cx="1631" cy="75" r="4" fill="#ebe5e4" stroke="#cfc3c2"/><circle cx="1646.5" cy="75" r="4" fill="#ebe5e4" stroke="#cfc3c2"/>
 <circle cx="1627" cy="87" r="4.2" fill="#e6eae3" stroke="#c9cfc6"/><circle cx="1637" cy="87" r="4.2" fill="#e6eae3" stroke="#c9cfc6"/>
 <circle cx="1627" cy="99" r="4.2" fill="#e3e6ea" stroke="#c6cacf"/><circle cx="1637" cy="99" r="4.2" fill="#e3e6ea" stroke="#c6cacf"/><circle cx="1647" cy="99" r="4.2" fill="#e3e6ea" stroke="#c6cacf"/>
</g>
<!-- statistics gear -->
<path d="M1699.3,76.8 L1699.1,69.2 L1704.9,69.2 L1704.7,76.8 L1709.5,78.7 L1714.6,73.2 L1718.8,77.4 L1713.3,82.5 L1715.2,87.3 L1722.8,87.1 L1722.8,92.9 L1715.2,92.7 L1713.3,97.5 L1718.8,102.6 L1714.6,106.8 L1709.5,101.3 L1704.7,103.2 L1704.9,110.8 L1699.1,110.8 L1699.3,103.2 L1694.5,101.3 L1689.4,106.8 L1685.2,102.6 L1690.7,97.5 L1688.8,92.7 L1681.2,92.9 L1681.2,87.1 L1688.8,87.3 L1690.7,82.5 L1685.2,77.4 L1689.4,73.2 L1694.5,78.7Z" fill="#9bbadf" stroke="#4784c7" stroke-width="2" stroke-linejoin="round"/>
<circle cx="1702" cy="90" r="4.6" fill="#fff" stroke="#4784c7" stroke-width="1.8"/>
<!-- sigma -->
<path d="M1753.5,71H1782L1783,80H1781.5C1780,76 1777,75.5 1772,75.5H1763.5L1776.5,89.5L1761.5,104H1773C1779,104 1782,102.5 1784,95.5H1785.5L1782.5,109H1753.5V107.5L1769.5,90.5L1753.5,73Z" fill="#a411a9" stroke="#4e0552" stroke-width="1"/>
<!-- attribute table (disabled) -->
<rect x="1815" y="71" width="38" height="38.5" fill="#eef0f2" stroke="#d3d8dc" stroke-width="2"/>
<rect x="1816" y="72" width="36" height="9" fill="#e6e9ec"/>
<path d="M1815,81H1853" stroke="#d3d8dc" stroke-width="2"/>
<path d="M1820,75.8H1828M1832,75.8H1848" stroke="#d5dadd" stroke-width="3.8"/>
<path d="M1820,85H1828M1832,85H1848M1820,91H1828M1832,91H1848M1820,97H1828M1832,97H1848M1820,103H1828M1832,103H1848" stroke="#d5dadd" stroke-width="1.8"/>
<use href="#dd" x="1870" y="87"/>
<use href="#chev" x="1962" y="84.5"/>

<!-- ===== toolbar 2 ===== -->
<defs>
 <g id="astBadge">
  <rect x="0" y="0" width="18" height="18" rx="3.5" fill="#c9a200"/>
  <g fill="#fff">
   <ellipse cx="9" cy="3.9" rx="1.8" ry="2.3"/><ellipse cx="9" cy="14.1" rx="1.8" ry="2.3"/>
   <ellipse cx="4.6" cy="6.4" rx="1.8" ry="2.3" transform="rotate(-60 4.6 6.4)"/><ellipse cx="13.4" cy="6.4" rx="1.8" ry="2.3" transform="rotate(60 13.4 6.4)"/>
   <ellipse cx="4.6" cy="11.6" rx="1.8" ry="2.3" transform="rotate(60 4.6 11.6)"/><ellipse cx="13.4" cy="11.6" rx="1.8" ry="2.3" transform="rotate(-60 13.4 11.6)"/>
   <circle cx="9" cy="9" r="2"/>
  </g>
 </g>
 <g id="plusBadge">
  <rect x="0" y="0" width="18" height="18" rx="3.5" fill="#5b995b"/>
  <rect x="1" y="1" width="16" height="8" rx="3" fill="#88b888" opacity="0.55"/>
  <path d="M9,3.5V14.5M3.5,9H14.5" stroke="#fff" stroke-width="3.4"/>
 </g>
 <linearGradient id="globeG" x1="0" y1="0" x2="0" y2="1"><stop offset="0" stop-color="#b9d3ef"/><stop offset="1" stop-color="#8fb4de"/></linearGradient>
 <g id="gpkgIco">
  <path d="M0.7,18.4L24.5,6L47.3,18.4L24.5,31.8Z" fill="#8a7400" stroke="#000" stroke-width="1.4"/>
  <circle cx="25" cy="21" r="17" fill="url(#globeG)" stroke="#6a9ad0" stroke-width="1.5"/>
  <path d="M12,9C15,6 19,5 21,7C22,10 18,11 17,14C16,17 13,19 11,17C10,14 10,11 12,9Z M26,5C30,3 36,5 38,9C40,13 37,15 35,14C33,17 36,20 33,23C30,25 29,21 27,19C25,17 22,16 24,13C25,11 23,8 26,5Z M15,22C17,21 19,23 19,26C19,29 17,31 15,29C13,27 13,23 15,22Z" fill="#2d5b8c"/>
  <path d="M0.7,18.4L24.5,31.8V50.7L0.7,35Z" fill="#d9ae00" stroke="#000" stroke-width="1.6" stroke-linejoin="round"/>
  <path d="M47.3,18.4L24.5,31.8V50.7L47.3,35Z" fill="#fdfd7a" stroke="#000" stroke-width="1.6" stroke-linejoin="round"/>
 </g>
 <g id="pencilD">
  <path d="M-5,-11H5V-44H-5Z" fill="#dad7d2" stroke="#c9c6c1" stroke-width="1.2"/>
  <path d="M-1.5,-11V-44" stroke="#e8e6e2" stroke-width="2"/>
  <path d="M-5,-44H5V-49H-5Z" fill="#f6f6f6" stroke="#d4d4d4" stroke-width="1.2"/>
  <path d="M-5,-11H5L0,0Z" fill="#eeeeee" stroke="#c9c9c9" stroke-width="1.2" stroke-linejoin="round"/>
 </g>
 <path id="ddS" d="M0,0H12L6,6Z" fill="#545454"/>
</defs>
<g fill="#b3b3b3">
 <use href="#dots" x="6" y="152"/><use href="#dots" x="500" y="152"/><use href="#dots" x="1438" y="152"/><use href="#dots" x="1616" y="152"/><use href="#dots" x="1740" y="152"/><use href="#dots" x="1864" y="152"/><use href="#dots" x="1962" y="152"/>
</g>
<!-- data source manager (hover box) -->
<linearGradient id="hovG" x1="0" y1="0" x2="0" y2="1"><stop offset="0" stop-color="#ffffff"/><stop offset="1" stop-color="#f0f0f0"/></linearGradient>
<rect x="23.5" y="139.5" width="62" height="59.5" rx="5.5" fill="url(#hovG)" stroke="#a3a3a3" stroke-width="2"/>
<path d="M30.2,162.2L55.8,151.9L66.1,177.5L40.5,187.8Z" fill="#d8703a" stroke="#9a4a20" stroke-width="1.5"/>
<path d="M37.2,150.5L65,147.2L68.3,175L40.5,178.3Z" fill="#f1c41b" stroke="#a88510" stroke-width="1.5"/>
<path d="M50.5,145L77.8,151L73.3,173.3L45.5,170.5Z" fill="#6c98c8" stroke="#2f4f78" stroke-width="1.6" transform="rotate(0)"/>
<use href="#plusBadge" x="60" y="174"/>
<!-- geopackage -->
<use href="#gpkgIco" x="96" y="141"/>
<use href="#astBadge" x="126.5" y="174"/>
<!-- new shapefile -->
<path d="M167,149L180.5,179L194,149H206" fill="none" stroke="#25374f" stroke-width="2.8"/>
<g fill="#fff" stroke="#25374f" stroke-width="2.4"><circle cx="167" cy="149" r="4.2"/><circle cx="194" cy="149" r="4.2"/><circle cx="206" cy="149" r="4.2"/><circle cx="180.5" cy="179.5" r="4.2"/></g>
<use href="#astBadge" x="192" y="174"/>
<!-- spatialite feather -->
<clipPath id="featherClip"><path d="M228.8,191.5C230,183 234,173 241,163C248,154 256,149 263,147.5C267,146.5 271,145 273.5,144C273.5,149 273,153 272.5,156C265,161 255,166 249,171C246,175 244,179 243,180.5C240,181 237,181.5 235,181.5L237.5,183.5C235,184.5 233,185 231.5,185.5C230.5,188 229.5,190 228.8,191.5Z"/></clipPath>
<path d="M228.8,191.5C230,183 234,173 241,163C248,154 256,149 263,147.5C267,146.5 271,145 273.5,144C273.5,149 273,153 272.5,156C265,161 255,166 249,171C246,175 244,179 243,180.5C240,181 237,181.5 235,181.5L237.5,183.5C235,184.5 233,185 231.5,185.5C230.5,188 229.5,190 228.8,191.5Z" fill="#6f9bd0"/>
<path clip-path="url(#featherClip)" d="M236.5,180.5H242.5M238,177H246M240,173.5H249.5M242.5,170H253M245,166.5H257M248,163H261M251.5,159.5H265M255,156H269.5M259.5,152.5H272M264,149.5H272" stroke="#e8f0fa" stroke-width="1.3" opacity="0.9"/>
<path d="M228.8,191.5C230,183 234,173 241,163C248,154 256,149 263,147.5C267,146.5 271,145 273.5,144C273.5,149 273,153 272.5,156C265,161 255,166 249,171C246,175 244,179 243,180.5C240,181 237,181.5 235,181.5L237.5,183.5C235,184.5 233,185 231.5,185.5C230.5,188 229.5,190 228.8,191.5Z" fill="none" stroke="#1c3350" stroke-width="1.4" stroke-linejoin="round"/>
<path d="M229.5,190C236,175 246,160 260,151C265,148 270,146 273,144.5" fill="none" stroke="#1c3350" stroke-width="2"/>
<use href="#astBadge" x="258" y="174"/>
<!-- memory layer -->
<g stroke="#22416a" stroke-width="2.4"><path d="M307,149V157M313,149V157M319,149V157M325,149V157M331,149V157M307,177V184M313,177V184M319,177V184"/></g>
<rect x="300.5" y="156.5" width="38" height="21.5" rx="3" fill="#6c98c8" stroke="#22416a" stroke-width="2.4"/>
<rect x="303" y="159" width="33" height="3" fill="#9bbbe0" opacity="0.7"/>
<use href="#astBadge" x="324" y="174"/>
<!-- virtual grid / mesh -->
<linearGradient id="gridG" x1="0" y1="0" x2="1" y2="1"><stop offset="0" stop-color="#a9c5e6"/><stop offset="1" stop-color="#5f8cc1"/></linearGradient>
<g fill="url(#gridG)" stroke="#1f3d63" stroke-width="2.4">
 <rect x="363" y="147" width="23.5" height="23.5"/>
 <rect x="386.5" y="147" width="19.5" height="24"/>
 <rect x="363" y="170.5" width="11.8" height="9.7"/><rect x="374.8" y="170.5" width="11.7" height="9.7"/>
 <rect x="363" y="180.2" width="11.8" height="9.6"/><rect x="374.8" y="180.2" width="11.7" height="9.6"/>
</g>
<path d="M363,147L386.5,170.5M386.5,147L363,170.5M386.5,171L406,147" stroke="#1f3d63" stroke-width="2.4"/>
<use href="#astBadge" x="390" y="174"/>
<!-- virtual layer -->
<linearGradient id="vlG" x1="0" y1="0" x2="1" y2="1"><stop offset="0" stop-color="#f2f5fa"/><stop offset="1" stop-color="#7fa0ca"/></linearGradient>
<rect x="429" y="146.5" width="42.5" height="43" rx="5" fill="url(#vlG)" stroke="#38577e" stroke-width="2.2"/>
<path d="M431,150L442.5,180L457,149L470,151" fill="none" stroke="#3b5a80" stroke-width="3.2"/>
<g fill="#f4f4f4" stroke="#3b5a80" stroke-width="2.6"><circle cx="431" cy="149.5" r="3.6"/><circle cx="457" cy="148.8" r="3.8"/><circle cx="470" cy="151" r="3"/><circle cx="442.5" cy="180" r="4.4"/></g>
<use href="#astBadge" x="456" y="174"/>
<!-- toggle editing (disabled) -->
<use href="#pencilD" transform="translate(529.5,188.5) rotate(28)"/>
<use href="#pencilD" transform="translate(539,191.5) rotate(29)"/>
<use href="#ddS" x="564" y="187"/>
<use href="#pencilD" transform="translate(598.5,191.5) rotate(30)"/>
<!-- save edits (disabled) -->
<rect x="659" y="146.5" width="39" height="39.5" rx="4" fill="#d3d5d8" stroke="#c5c7cb" stroke-width="1.6"/>
<rect x="664" y="150" width="25" height="13" fill="#f3f3f3"/>
<path d="M667,153H686M667,157H686M667,160.5H686" stroke="#d3d5d8" stroke-width="1.4"/>
<rect x="668" y="172.5" width="22" height="13" fill="#f3f3f3"/>
<rect x="671" y="175" width="5" height="7" fill="#d3d5d8"/>
<use href="#pencilD" transform="translate(683,191.5) rotate(29) scale(0.62)"/>
<!-- digitize line (disabled) -->
<path d="M734,180L758,156" stroke="#d9ddd6" stroke-width="3.2" stroke-dasharray="4,3"/>
<rect x="726.5" y="180.5" width="7.5" height="7.5" fill="#ebebeb" stroke="#cbcbcb" stroke-width="1.8"/>
<rect x="758.5" y="148.5" width="7.5" height="7.5" fill="#ebebeb" stroke="#cbcbcb" stroke-width="1.8"/>
<use href="#dd" x="782" y="165"/>
<!-- points (disabled) -->
<g fill="#e4e6e3" stroke="#c9c9c9" stroke-width="1.8"><circle cx="820" cy="168.3" r="5.3"/><circle cx="834" cy="152" r="5.3"/><circle cx="851.5" cy="156.3" r="5.3"/></g>
<use href="#gearBadgeD" x="838.5" y="170.5"/>
<!-- vertex tool (disabled) -->
<rect x="888.5" y="150.5" width="11.5" height="11.5" fill="#e8e8e8" stroke="#c6c6c6" stroke-width="2"/>
<path d="M890.5,152.5L898,160M898,152.5L890.5,160M900,156H920M889.5,162L883.5,187" stroke="#c6c6c6" stroke-width="1.6"/>
<path d="M899,188L913.5,172.5" stroke="#d5d2c9" stroke-width="5.5" stroke-linecap="round"/>
<path d="M896,168L905,162C909,161 912,164 911,166L902,174Z" fill="#e2e2e0" stroke="#cfcdc7" stroke-width="1.4"/>
<path d="M922,188L907,172" stroke="#ccc9c0" stroke-width="5" stroke-linecap="butt"/>
<path d="M912,167L923,163" stroke="#cfcfcf" stroke-width="2"/>
<use href="#dd" x="938" y="165"/>
<!-- modify attributes (disabled) -->
<g fill="#e5e3dc" stroke="#cfccc2" stroke-width="1.6"><rect x="972.5" y="148.5" width="39" height="10"/><rect x="972.5" y="162.5" width="39" height="10"/><rect x="972.5" y="176.5" width="39" height="10"/></g>
<use href="#pencilD" transform="translate(984.5,190.5) rotate(32)"/>
<!-- delete selected (disabled) -->
<rect x="1038.5" y="148.5" width="27" height="27" fill="#e6e4dd" stroke="#d2cfc6" stroke-width="1.6"/>
<path d="M1044.5,153.5H1073" stroke="#d8cbcb" stroke-width="4.5" stroke-linecap="round"/>
<path d="M1051,152C1051,148.5 1059,148.5 1059,152" fill="none" stroke="#d8cbcb" stroke-width="2"/>
<path d="M1043.5,160.5H1073.5L1071,189.5H1046Z" fill="#f0eaea" fill-opacity="0.85" stroke="#d5c7c7" stroke-width="2.2" stroke-linejoin="round"/>
<path d="M1052,163V187M1058.5,163V187M1065,163V187" stroke="#d5c7c7" stroke-width="2"/>
<!-- cut (disabled) -->
<path d="M1102,165.3H1128L1129,170.5C1119,171 1106,171 1102,165.3Z" fill="#ebebeb" stroke="#d0d0d0" stroke-width="1.1"/>
<path d="M1128.5,166.5C1133,160.5 1138,155.5 1142,155.5C1146,155.5 1147.5,158 1146.5,160.5C1145,164 1139,166 1132.5,166.5" fill="#f1f1f1" stroke="#cdbdbd" stroke-width="2.3"/>
<path d="M1132,170.5C1137,172 1145,175 1145.5,179C1146,182 1143.5,183.5 1140.5,182.5C1137,181 1134.5,176 1132.5,171" fill="#f1f1f1" stroke="#cdbdbd" stroke-width="2.3"/>
<path d="M1105.3,153.4C1115,156 1125,161 1132,166.5L1133.5,172.5C1124,166 1113,159 1105.3,153.4Z" fill="#ececec" stroke="#cfcfcf" stroke-width="1.1"/>
<!-- copy (disabled) -->
<path d="M1183,149H1196L1205,157.5V179.5H1183Z" fill="#f4f4f4" stroke="#d9d9d9" stroke-width="2"/>
<path d="M1175,157H1188L1198,166V188H1175Z" fill="#f7f7f7" stroke="#c4c4c4" stroke-width="2.2"/>
<path d="M1188,157V166H1198" fill="#e0e0e0" stroke="#c4c4c4" stroke-width="2"/>
<path d="M1178.5,173H1190M1178.5,177.5H1195M1178.5,182H1187M1178.5,186H1194" stroke="#cfcfcf" stroke-width="1.8"/>
<!-- paste (disabled) -->
<rect x="1241" y="149.5" width="31" height="38" fill="#efeee9" stroke="#d1cec6" stroke-width="2"/>
<rect x="1246.5" y="146.5" width="21" height="8" fill="#ebebeb" stroke="#c9c9c9" stroke-width="2"/>
<path d="M1246,156H1260L1268,163.5V184H1246Z" fill="#f7f7f7" stroke="#c4c4c4" stroke-width="2"/>
<path d="M1260,156V163.5H1268" fill="#e2e2e2" stroke="#c4c4c4" stroke-width="1.6"/>
<path d="M1249.5,166.5H1259M1249.5,171H1265M1249.5,175.5H1258M1249.5,180H1265" stroke="#cfcfcf" stroke-width="1.8"/>
<!-- undo / redo (disabled) -->
<path d="M1304,165.5L1317,150V159.5C1332,159.5 1340,165 1340,173.5C1340,181 1333,186 1322,186V180C1327,180 1330,177.5 1330,174C1330,170 1326,168.5 1317,168.5V181.7Z" fill="#dcd7d3" stroke="#cdc8c4" stroke-width="1.2"/>
<path d="M1406,165.5L1393,150V159.5C1378,159.5 1370,165 1370,173.5C1370,181 1377,186 1388,186V180C1383,180 1380,177.5 1380,174C1380,170 1384,168.5 1393,168.5V181.7Z" fill="#dcdfdd" stroke="#cdd0ce" stroke-width="1.2"/>
<!-- label abc (disabled) -->
<linearGradient id="abcG" x1="0" y1="0" x2="1" y2="1"><stop offset="0" stop-color="#eeede6"/><stop offset="1" stop-color="#dcd9cd"/></linearGradient>
<path d="M1461,163L1468.5,152.5H1501.5V173.5H1468.5Z" fill="url(#abcG)" stroke="#d3d0c4" stroke-width="1.6"/>
<text x="1468.5" y="168.3" font-size="15.2" font-weight="bold" fill="#b8b8ba">abc</text>
<!-- diagram (disabled) -->
<circle cx="1536" cy="161.7" r="13.5" fill="#ddd9cc"/>
<path d="M1536,161.7L1524.3,154.7A13.5,13.5 0 0 0 1536,175.2Z" fill="#c3cdc7"/>
<path d="M1536,161.7L1547.7,154.7A13.5,13.5 0 0 1 1536,175.2Z" fill="#d1c5c5"/>
<path d="M1536,161.7L1524.3,154.7M1536,161.7L1547.7,154.7M1536,161.7V175.2" stroke="#c4c4c2" stroke-width="1.6"/>
<circle cx="1536" cy="161.7" r="13.5" fill="none" stroke="#c8c8c6" stroke-width="1.8"/>
<rect x="1538.5" y="176.5" width="8" height="13.5" fill="#dcd8cb"/>
<rect x="1547" y="164.5" width="7" height="25.5" fill="#c3cdc7" stroke="#b8c2bd" stroke-width="1.6"/>
<rect x="1555" y="178.5" width="7" height="11.5" fill="#d1c5c5" stroke="#c2b8b8" stroke-width="1.6"/>
<use href="#chev" x="1583" y="162"/>
<!-- wms globe -->
<linearGradient id="greyG" x1="0" y1="0" x2="1" y2="0"><stop offset="0" stop-color="#2e2e2e"/><stop offset="1" stop-color="#e6e6e6"/></linearGradient>
<linearGradient id="blueC" x1="0" y1="0" x2="1" y2="0"><stop offset="0" stop-color="#2a7ad0"/><stop offset="1" stop-color="#e2eefa"/></linearGradient>
<linearGradient id="blueL" x1="0" y1="0" x2="1" y2="1"><stop offset="0" stop-color="#7aaee8"/><stop offset="1" stop-color="#e4eef8"/></linearGradient>
<clipPath id="wmsClip"><ellipse cx="1664" cy="164.9" rx="22.8" ry="19.6"/></clipPath>
<g clip-path="url(#wmsClip)">
 <rect x="1640" y="144" width="48" height="42" fill="url(#blueL)"/>
 <rect x="1640" y="154.8" width="15.5" height="19.8" fill="url(#greyG)"/>
 <rect x="1672.5" y="154.8" width="15.5" height="19.8" fill="url(#greyG)"/>
 <path d="M1656.5,154.8C1658.5,149 1661.5,146.5 1664,146C1666.5,146.5 1669.5,149 1671.5,154.8Z" fill="url(#greyG)"/>
 <path d="M1656.5,174.6C1658.5,180.5 1661.5,183 1664,183.5C1666.5,183 1669.5,180.5 1671.5,174.6Z" fill="url(#greyG)"/>
 <rect x="1655.5" y="154.8" width="17" height="19.8" fill="url(#blueC)"/>
 <path d="M1640,154.8H1688M1640,164.9H1688M1640,174.6H1688" stroke="#86b6ea" stroke-width="1.6"/>
 <ellipse cx="1664" cy="164.9" rx="9.3" ry="20" fill="none" stroke="#86b6ea" stroke-width="1.6"/>
</g>
<ellipse cx="1664" cy="164.9" rx="23" ry="19.9" fill="none" stroke="#4a86d0" stroke-width="2"/>
<use href="#plusBadge" x="1670" y="174"/>
<path d="M1680.5,187H1692L1686.2,193Z" fill="#1e2a1e"/>
<use href="#chev" x="1707" y="162"/>
<!-- python -->
<linearGradient id="pyB" x1="0" y1="0" x2="1" y2="1"><stop offset="0" stop-color="#5a9fd4"/><stop offset="1" stop-color="#306998"/></linearGradient>
<linearGradient id="pyY" x1="0" y1="0" x2="1" y2="1"><stop offset="0" stop-color="#ffe873"/><stop offset="1" stop-color="#ffd43b"/></linearGradient>
<g transform="translate(1768,148)">
 <path d="M19,0C12,0 10,3 10,6V10H20V12H6C2,12 0,15 0,20C0,25 2,28 6,28H10V23C10,19.5 12.5,17.5 16,17.5H24C27,17.5 30,15 30,12V6C30,3 27,0 21,0Z" fill="url(#pyB)"/>
 <path d="M21,40C28,40 30,37 30,34V30H20V28H34C38,28 40,25 40,20C40,15 38,12 34,12H30V17C30,20.5 27.5,22.5 24,22.5H16C13,22.5 10,25 10,28V34C10,37 13,40 19,40Z" fill="url(#pyY)"/>
 <circle cx="14.5" cy="5" r="1.9" fill="#fff"/><circle cx="25.5" cy="35" r="1.9" fill="#fff"/>
</g>
<path d="M1798.5,178L1809.5,183.5L1798.5,189" fill="none" stroke="#3a3a3a" stroke-width="2.4"/>
<use href="#chev" x="1830.5" y="162"/>
<!-- help -->
<rect x="1893" y="147" width="39" height="41" fill="#6c98c8" stroke="#111" stroke-width="2.4"/>
<rect x="1894" y="148" width="8.5" height="39" fill="#2d3e50"/>
<path d="M1902.5,147V188" stroke="#111" stroke-width="1.4"/>
<text x="1917" y="179.5" font-size="31" font-weight="bold" fill="#fff" text-anchor="middle" class="serif">?</text>
<!-- ===== toolbar 3 ===== -->
<g fill="#b3b3b3">
 <use href="#dots" x="6" y="230"/><use href="#dots" x="170" y="230"/><use href="#dots" x="268" y="230"/><use href="#dots" x="366" y="230"/><use href="#dots" x="1962" y="230"/>
</g>
<!-- locator green search -->
<linearGradient id="grnG" x1="0" y1="0" x2="0" y2="1"><stop offset="0" stop-color="#66a84a"/><stop offset="1" stop-color="#98d27a"/></linearGradient>
<rect x="30" y="222" width="48" height="48" fill="url(#grnG)"/>
<path d="M78,222V246L54,270H30Z" fill="#fff" opacity="0"/>
<path d="M78,222L30,270V222Z" fill="#ffffff" opacity="0.0"/>
<path d="M60,222H78V240L66,252Z" fill="#ffffff" opacity="0.12"/>
<circle cx="58.2" cy="241.7" r="14" fill="#7fbf62" fill-opacity="0.5" stroke="#f4f8fc" stroke-width="4.2"/>
<path d="M46.5,253.5L36,264" stroke="#eef3fb" stroke-width="5.6" stroke-linecap="round"/>
<!-- osm edit -->
<rect x="96" y="222" width="41" height="48" fill="#fdd249"/>
<rect x="97" y="222" width="10" height="48" fill="#fde59c" opacity="0.8"/>
<rect x="116" y="222" width="12" height="48" fill="#fee7a0" opacity="0.45"/>
<rect x="96" y="222" width="1.8" height="33" fill="#8c0a3c"/>
<rect x="96" y="222" width="7" height="2.5" fill="#8c0a3c"/>
<path d="M97,223.5L106.5,228V234L97.5,234.5Z" fill="#5fc862"/>
<path d="M106.5,228L113,227L107,233Z" fill="#0ea00e"/>
<rect x="97.5" y="238" width="5.5" height="16" fill="#b96d92"/>
<path d="M106,241L111,240.5L111.8,250.5L107,251Z" fill="#2d7888"/>
<path d="M116,222H120.5C120,230 122,234 126,239C131,245 135,250 137,256V263C134,256 129,250 125,246C119,239 116,232 116,222Z" fill="#3a72d8"/>
<path d="M127,247C131,251 135,255 137,260V263L128,262Z" fill="#88a9e8"/>
<path d="M101,270C104,265 110,262 116,263C121,264 124,266 126,270Z" fill="#3a72d8"/>
<path d="M113,270C117,267 124,266 131,266L134,270Z" fill="#3a72d8"/>
<path d="M96.5,270L101.5,258.5L116,253" fill="none" stroke="#2f4858" stroke-width="1.7"/>
<path d="M96,259.5L102,257.5" stroke="#2f4858" stroke-width="1.6"/>
<circle cx="102" cy="257.2" r="1.9" fill="#fff"/><circle cx="114" cy="253.6" r="1.9" fill="#fff"/>
<path d="M120.5,247.5L141.5,224" stroke="#6b2e08" stroke-width="8" stroke-linecap="butt"/>
<path d="M120.5,247.5L141.5,224" stroke="#a4501a" stroke-width="5"/>
<path d="M117.3,244.8L123.5,250.3L116,253.5Z" fill="#dca478"/>
<path d="M116,253.5L117.5,249.5L119.8,251.7Z" fill="#3a3a3a"/>
<!-- bus / gtfs plugin -->
<circle cx="218" cy="246" r="24" fill="#0e5676"/>
<path d="M207,230H229C231,230 232,231 232,233V255C232,257 231,258 229,258H207C205,258 204,257 204,255V233C204,231 205,230 207,230Z" fill="#fff"/>
<rect x="207.5" y="235" width="21" height="10.5" rx="1.5" fill="#0e5676"/>
<rect x="212" y="231" width="12" height="1.6" fill="#0e5676"/>
<circle cx="209.5" cy="251.5" r="2" fill="#0e5676"/><circle cx="226.5" cy="251.5" r="2" fill="#0e5676"/>
<rect x="206.5" y="257" width="4" height="5" rx="1.5" fill="#fff"/><rect x="225.5" y="257" width="4" height="5" rx="1.5" fill="#fff"/>
<!-- GTFS -->
<g stroke-width="1.2" fill="none">
 <path d="M293.6,227.4H303.5V237.4" stroke="#f08080"/>
 <path d="M293.6,237.4H321V266.8H304" stroke="#8a9cf0"/>
 <path d="M321.4,227.4H329.3V256.6H304" stroke="#70e070"/>
 <path d="M305.5,247H338.6" stroke="#f08080"/>
</g>
<text x="292.3" y="253.5" font-size="19" font-weight="bold" fill="#3b4653" textLength="47.6" lengthAdjust="spacingAndGlyphs">GTFS</text>
<g fill="#f0f0f0" stroke="#999" stroke-width="0.6"><circle cx="303.5" cy="227.4" r="1.2"/><circle cx="329.3" cy="227.4" r="1.2"/><circle cx="294" cy="237.4" r="1.2"/><circle cx="307" cy="237.4" r="1.2"/><circle cx="321" cy="237.4" r="1.2"/><circle cx="304" cy="256.6" r="1.2"/><circle cx="315" cy="256.6" r="1.2"/><circle cx="321" cy="256.6" r="1.2"/><circle cx="329.3" cy="256.6" r="1.2"/><circle cx="304" cy="266.8" r="1.2"/><circle cx="312" cy="266.8" r="1.2"/><circle cx="321" cy="266.8" r="1.2"/></g>
<!-- select (disabled) -->
<rect x="393.5" y="225.5" width="41.5" height="37.5" fill="none" stroke="#c8c8c8" stroke-width="2.2" stroke-dasharray="4.5,3"/>
<rect x="395" y="227" width="25.5" height="25.5" fill="#e2dfd6" stroke="#d6d3ca" stroke-width="1.6"/>
<path d="M410,239L436,253L426,256L437,266L432,270L422,259L419,268Z" fill="#f4f4f4" stroke="#c2c2c2" stroke-width="2" stroke-linejoin="miter"/>
<use href="#dd" x="450" y="243"/>
<!-- select by expression (disabled) -->
<rect x="493" y="239" width="30.5" height="26.5" fill="#e3e1da" stroke="#d3d0c8" stroke-width="2"/>
<rect x="487" y="229" width="28.5" height="26.5" fill="#edeeee" stroke="#d5d9d7" stroke-width="2"/>
<rect x="490" y="233" width="22.5" height="6.5" fill="#fff" stroke="#d8dcdc" stroke-width="2"/>
<rect x="490" y="243" width="22.5" height="6.5" fill="#fff" stroke="#d8dcdc" stroke-width="2"/>
<use href="#dd" x="540" y="243"/>
<!-- deselect -->
<rect x="575" y="227" width="26.5" height="26.5" fill="#fde84e" stroke="#c9a200" stroke-width="2.4"/>
<rect x="583" y="235" width="26.5" height="26.5" fill="#fde84e" stroke="#c9a200" stroke-width="2.4"/>
<rect x="596.2" y="248" width="21.8" height="21.8" rx="3" fill="#dc1b1b"/>
<path d="M599,258A8,8 0 0 1 615,258Z" fill="#f09090"/>
<circle cx="607.1" cy="258.9" r="7.6" fill="none" stroke="#eeeeee" stroke-width="2.6"/>
<path d="M602,264L612.5,253.5" stroke="#eeeeee" stroke-width="2.6"/>
<use href="#dd" x="630" y="243"/>
<!-- feature location -->
<rect x="665" y="227" width="26.5" height="26.5" fill="#fde84e" stroke="#c9a200" stroke-width="2.4"/>
<path d="M699,268L692.5,256C690,251 692,246 699,245.5C706,246 708,251 705.5,256Z" fill="#6a8fab" stroke="#55789a" stroke-width="1.2"/>
<circle cx="699" cy="252.5" r="2.8" fill="#fff"/>
<!-- red highlight ellipse -->
<ellipse cx="52.5" cy="165.5" rx="36.3" ry="38.3" fill="none" stroke="#fd2a0e" stroke-width="3.6"/>

<!-- ===== layers toolbar ===== -->
<linearGradient id="swY" x1="0" y1="0" x2="1" y2="0"><stop offset="0" stop-color="#fff5a0"/><stop offset="1" stop-color="#f5e000"/></linearGradient>
<g>
 <path d="M18.1,662.1L33.8,667.7L31.2,673.2L15.6,667.8Z" fill="#f7e641"/>
 <path d="M15.6,667.8L31.2,673.2L29.5,678.5L13.8,673Z" fill="#7aa6dc"/>
 <path d="M13.8,673L29.5,678.5L29.2,683.8L13.1,676.4Z" fill="#e8403c"/>
 <path d="M24.5,670.5L32,677.5L24,685L16.5,678Z" fill="#d9ac6e" stroke="#a9742e" stroke-width="1.2"/>
 <path d="M27.5,674.5L41,662" stroke="#a9681c" stroke-width="4.6" stroke-linecap="round"/>
 <path d="M27.5,674.5L41,662" stroke="#e29c42" stroke-width="2.6" stroke-linecap="round"/>
</g>
<g>
 <path d="M72,670V660.5H89.5V676" fill="none" stroke="#8a8a8a" stroke-width="2"/>
 <rect x="68.5" y="664.5" width="16.5" height="16" fill="none" stroke="#8a8a8a" stroke-width="2"/>
 <path d="M64.5,675V685H76.5" fill="none" stroke="#8a8a8a" stroke-width="2"/>
 <path d="M76.5,676V658.5C76.5,655.5 81,655.5 81,658.5V676C81,678 77.5,678 77.5,676V663" fill="none" stroke="#2d5a8a" stroke-width="1.6"/>
 <rect x="80" y="676" width="12" height="12" rx="2.5" fill="#5b995b"/>
 <path d="M86,678.3V685.7M82.3,682H89.7" stroke="#fff" stroke-width="2.4"/>
</g>
<g>
 <path d="M113.5,665C122,661 131,660.5 141,665.5" fill="none" stroke="#7a7a7a" stroke-width="1.3"/>
 <path d="M113.8,672.5C119,665 129,663.5 137,667C140,668.5 142,670.5 143.5,672.5C140,677 134,682 127,682C120.5,682 116,677 113.8,672.5Z" fill="#fff" stroke="#7a7a7a" stroke-width="1.5"/>
 <circle cx="127.8" cy="672.3" r="7.8" fill="#6b98cf" stroke="#3d6aa4" stroke-width="1.2"/>
 <circle cx="127.5" cy="671.3" r="3.1" fill="#000"/>
 <circle cx="126.5" cy="670.3" r="1.1" fill="#fff"/>
 <path d="M136.2,682.8H147.8L142,688.8Z" fill="#4a4a4a"/>
</g>
<g>
 <path d="M165.5,657.5H191V663L181,672.7V687.5L174.5,682V672.7L165.5,663Z" fill="#6d98c8" stroke="#3a5a80" stroke-width="1.6" stroke-linejoin="round"/>
 <rect x="166.5" y="658.5" width="23.5" height="4" fill="#fbe44a"/>
 <path d="M186.6,683H197.7L192.2,689Z" fill="#4a4a4a"/>
</g>
<g>
 <path d="M229,661.5C226.5,658 218.5,658 218.5,663C218.5,666 221,667.8 224.5,667.8C219.5,667.8 216.5,670 216.5,673C216.5,678.5 226,679 230.5,675" fill="none" stroke="#c6c6c6" stroke-width="2.6" stroke-linecap="round"/>
 <path d="M229.5,673.5H243.5V687.5H239.5V680L236.5,677L233.5,680V687.5H229.5Z" fill="#dedede"/>
 <path d="M256,669H271.7L263.8,676.7Z" fill="#4a4a4a"/>
</g>
<g id="treeLines">
 <path d="M288.3,661H316" stroke="#8b8b84" stroke-width="2"/>
 <path d="M290.8,661V683.3M290.8,669H296M290.8,680.5H296" stroke="#b0b0b0" stroke-width="1.8"/>
 <rect x="296.5" y="666.5" width="5" height="5" fill="#e8e840" stroke="#f28c0a" stroke-width="1.8"/>
 <rect x="296.5" y="678.5" width="5" height="5" fill="#e8e840" stroke="#f28c0a" stroke-width="1.8"/>
</g>
<path d="M304.5,658.5H311.5V675H317.5L308,684.5L298.5,675H304.5Z" fill="#6d98c8" stroke="#38577e" stroke-width="1.6" stroke-linejoin="round"/>
<use href="#treeLines" x="50"/>
<path d="M354.5,683H361.5V667H367.5L358,657L348.5,667H354.5Z" fill="#6d98c8" stroke="#38577e" stroke-width="1.6" stroke-linejoin="round"/>
<g>
 <rect x="389.5" y="659.5" width="22" height="21.5" fill="#efefef" stroke="#858580" stroke-width="2.4"/>
 <rect x="404.4" y="676" width="11.7" height="9.5" rx="2.8" fill="#e8464e"/>
 <rect x="406.5" y="679.5" width="7.5" height="2.5" fill="#fff"/>
</g>

<path d="M0,0H5C2,1 1,2 0,5Z" fill="#3b1a7a"/>
<path d="M0,1394V1388C0.5,1391 2,1393 6,1394Z" fill="#1c1830"/>
<g id="content"></g>
</svg>
</body></html>
